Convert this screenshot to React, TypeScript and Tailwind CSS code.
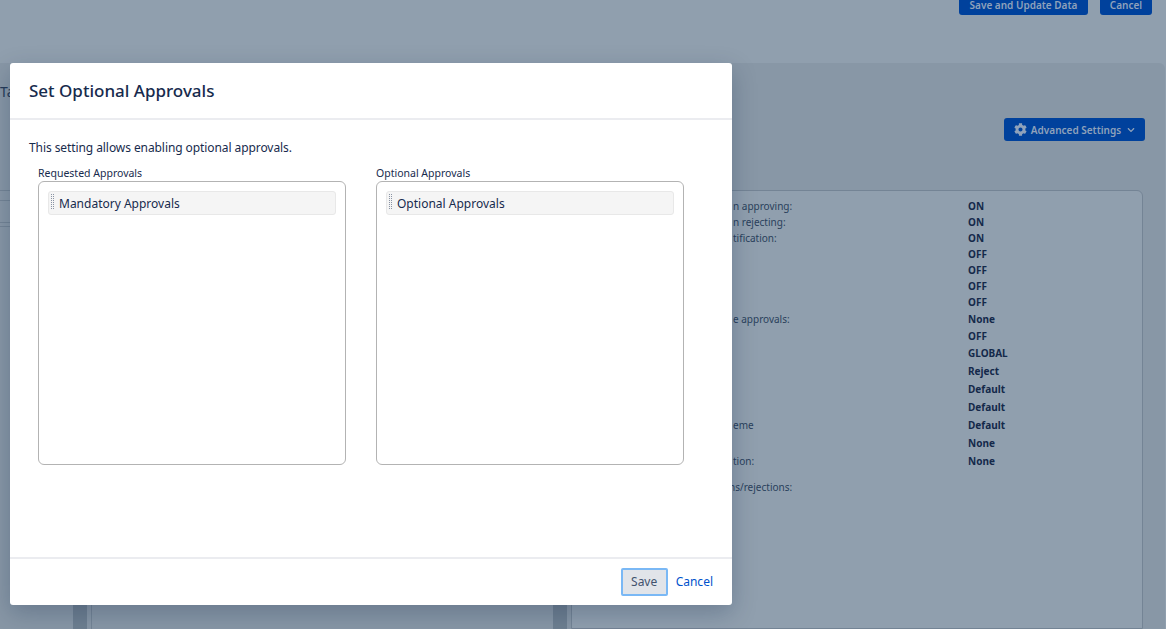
import { FaChevronDown, FaCog } from "react-icons/fa";

const rows: [string, string, string][] = [
  ["n approving:", "ON", "h-4"],
  ["n rejecting:", "ON", "h-4"],
  ["tification:", "ON", "h-4"],
  ["", "OFF", "h-4"],
  ["", "OFF", "h-4"],
  ["", "OFF", "h-4"],
  ["", "OFF", "h-4"],
  ["e approvals:", "None", "h-[17px]"],
  ["", "OFF", "h-[17px]"],
  ["", "GLOBAL", "h-[18px]"],
  ["", "Reject", "h-[18px]"],
  ["", "Default", "h-[18px]"],
  ["", "Default", "h-[18px]"],
  ["eme", "Default", "h-[18px]"],
  ["", "None", "h-[18px]"],
  ["tion:", "None", "h-[18px]"],
];

function DragHandle() {
  return (
    <svg width="4" height="16" viewBox="0 0 4 16" className="shrink-0 mt-[-3px]">
      {[0, 2, 4, 6, 8, 10, 12, 14].flatMap((y) =>
        [0, 2].map((x) => <rect key={`${x}-${y}`} x={x} y={y} width="1" height="1" fill="#8993a4" />)
      )}
    </svg>
  );
}

function ApprovalList({ title, item }: { title: string; item: string }) {
  return (
    <div className="w-[308px] flex flex-col">
      <div className="text-[10.5px] leading-[16px] text-[#172b4d] h-[16px]">{title}</div>
      <div className="h-[284px] border border-[#b3b3b3] rounded-[6px] p-[9px]">
        <div className="h-[24px] bg-[#f5f5f5] border border-[#e8e8e8] rounded-[3px] flex items-center pl-[2px] gap-[4px] text-[12px] text-[#172b4d]">
          <DragHandle />
          <span className="pt-[1px]">{item}</span>
        </div>
      </div>
    </div>
  );
}

export default function App() {
  return (
    <div className="relative h-[629px] w-[1166px] overflow-hidden bg-[#909fae] text-[#172b4d] font-['Noto_Sans','Open_Sans',sans-serif]">
      {/* Header behind the dimmer */}
      <div className="h-[63px] flex justify-end items-start gap-[12px] pr-[14px]">
        <button className="h-[15px] w-[129px] rounded-b-[3px] bg-[#00419c] text-[#8fa2bb] text-[10px] font-semibold leading-[10px] flex items-start justify-center">
          Save and Update Data
        </button>
        <button className="h-[15px] w-[52px] rounded-b-[3px] bg-[#00419c] text-[#8fa2bb] text-[10px] font-semibold leading-[10px] flex items-start justify-center">
          Cancel
        </button>
      </div>

      {/* Page body behind the dimmer */}
      <div className="h-[566px] bg-[#8897a6] rounded-tr-[6px] mr-px flex flex-col">
        <div className="h-[55px] flex justify-end pr-[20px] pt-[55px]">
          <button className="h-[23px] w-[141px] shrink-0 rounded-[3px] bg-[#00419c] text-[#8fa2bb] text-[10px] font-semibold flex items-center justify-center">
            <FaCog size={13} />
            <span className="ml-[4px] pt-[2px]">Advanced Settings</span>
            <FaChevronDown size={8} className="ml-[6px]" />
          </button>
        </div>
        <div className="flex justify-end gap-[4px] mt-[72px] pr-[22px] h-[439px]">
          <div className="w-[14px] bg-[#6e7f90] mt-[340px]" />
          <div className="w-[572px] bg-[#909fae] border border-[#748495] rounded-t-[6px] text-[10px] leading-[16px] text-[#172b4d]">
            <div className="pt-[7px] flex flex-col">
              {rows.map(([label, value], i) => (
                <div key={i} className={`flex ${rows[i][2]} items-center`}>
                  <span className="w-[396px] pl-[161px] text-[#2a3f5c]">{label}</span>
                  <span className="font-bold text-[#14294a]">{value}</span>
                </div>
              ))}
              <div className="mt-[9px] pl-[157px] text-[#2a3f5c]">ns/rejections:</div>
            </div>
          </div>
        </div>
      </div>

      {/* Left remnants behind the dialog */}
      <div className="absolute left-0 top-[81px] text-[14px] text-[#253a58]">Ta</div>
      <div className="absolute left-[73px] top-[600px] w-[14px] h-[29px] bg-[#6e7f90]" />
      <div className="absolute left-[91px] top-[600px] w-px h-[29px] bg-[#748495]" />
      <div className="absolute left-0 top-[190px] w-[10px] h-px bg-[#748495]" />
      <div className="absolute left-0 top-[200px] w-[10px] h-px bg-[#748495]" />
      <div className="absolute left-0 top-[222px] w-[10px] h-px bg-[#748495]" />
      <div className="absolute left-0 top-[226px] w-[10px] h-px bg-[#748495]" />

      {/* Dialog */}
      <div className="absolute left-[10px] top-[63px] w-[722px] h-[542px] bg-white rounded-[3px] shadow-[0_8px_24px_rgba(9,30,66,0.25)] flex flex-col">
        <div className="h-[57px] flex items-center px-[19px] border-b-2 border-[#ebecf0]">
          <h2 className="text-[17px] font-medium text-[#172b4d]">Set Optional Approvals</h2>
        </div>
        <div className="flex-1 pt-[19px] px-[19px]">
          <p className="text-[12px] leading-[18px] tracking-[-0.08px] text-[#172b4d]">This setting allows enabling optional approvals.</p>
          <div className="flex gap-[30px] pl-[9px] mt-[8px]">
            <ApprovalList title="Requested Approvals" item="Mandatory Approvals" />
            <ApprovalList title="Optional Approvals" item="Optional Approvals" />
          </div>
        </div>
        <div className="h-[48px] border-t-2 border-[#ebecf0] flex items-center justify-end gap-[8px] pr-[19px]">
          <button className="h-[28px] w-[47px] bg-[#e1e4e9] text-[12px] text-[#42526e] rounded-[2px] border-2 border-[#7ab8f5]">Save</button>
          <button className="text-[12px] text-[#0052cc]">Cancel</button>
        </div>
      </div>
    </div>
  );
}
